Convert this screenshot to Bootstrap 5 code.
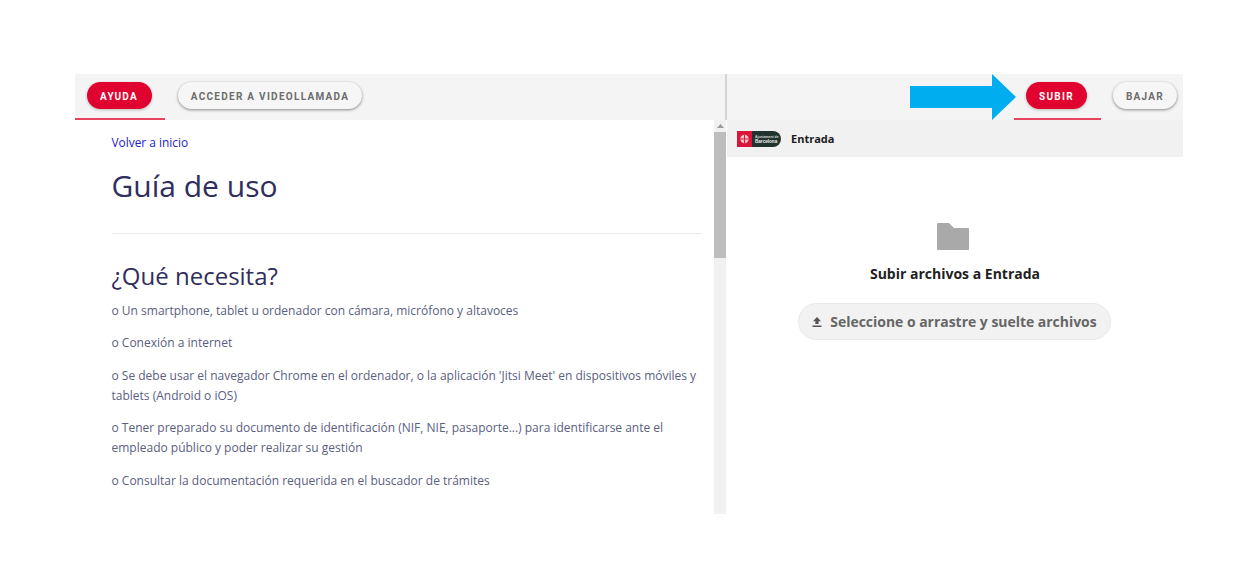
<!DOCTYPE html>
<html lang="es">
<head>
<meta charset="utf-8">
<title>Guía de uso</title>
<link href="https://cdn.jsdelivr.net/npm/bootstrap@5.3.0/dist/css/bootstrap.min.css" rel="stylesheet">
<style>
html,body{background:#fff;margin:0;height:575px;overflow:hidden}
.stage{padding:74px 73px 0 75px;box-sizing:content-box;height:440px}
.frame{height:440px;width:1108px}
.leftpane{width:651px;flex:none}
.midline{width:2px;background:#d4d4d4;height:46px;flex:none;margin-left:-1px;position:relative}
.rightpane{flex:1;min-width:0}
.bar{height:46px;background:#f4f4f4}
.tabcell{height:46px;border-bottom:2px solid #e8445f;display:flex;align-items:flex-start;padding:8px 2px 0 0;flex:none}
.tab-help{width:90px}
.tab-up{width:87px}
.pill{font:700 10px/27px Roboto,sans-serif;letter-spacing:1.28px;border-radius:14px;height:27px;padding:1px 0 0;border:0;white-space:nowrap;text-align:center}
.pill-red{background:#e0022f;color:#fff;box-shadow:0 1px 3px rgba(0,0,0,.25)}
.pill-light{background:#f6f6f6;color:#6c6c6c;box-shadow:0 1px 3px rgba(0,0,0,.45)}
.w-ayuda{width:65px}
.w-subir{width:61px}
.w-bajar{width:64px}
.w-video{width:184px}
.cell-video{margin-left:13px;padding-top:8px}
.cell-down{margin-left:12px;padding-top:8px}
.toolright{position:relative;padding-right:6px}
.scrollzone{height:394px;overflow:hidden}
.doc{flex:1;padding:14px 12px 0 36.5px;font-family:"Open Sans",sans-serif;min-width:0}
.back{font-size:11.9px;line-height:16px;color:#2222cc;text-decoration:none;display:block}
.doc h1{font-size:30px;line-height:40px;font-weight:400;color:#2f2e5e;margin:16px 0 27px}
.doc hr{margin:0 0 26px;border-top:1px solid #ebebeb;opacity:1}
.doc h2{font-size:24px;line-height:32px;font-weight:400;color:#2f2e5e;margin:0 0 9px}
.doc p{font-size:12px;line-height:20.3px;color:#5a6080;margin:0 0 12px}
.trackbar{width:12px;background:#f1f1f1;flex:none}
.trackarrow{height:12px;display:flex;align-items:center;justify-content:center}
.thumbbar{height:126px;background:#bdbdbd}
.folderhead{height:37px;background:#f1f1f1;padding-left:10px;gap:10px;font:700 11px "Open Sans",sans-serif;color:#1c1c1c}
.logotext{font:700 3.4px "Liberation Sans",sans-serif;fill:#d5dcd9}
.logotext-big{font:700 4.6px "Liberation Sans",sans-serif;fill:#eef2f0}
.dropzone{padding-top:65px;font-family:"Open Sans",sans-serif}
.foldericon{margin-right:5px;margin-top:1px}
.droptitle{font-size:14px;font-weight:700;color:#1f1f1f;line-height:20px;margin:14px 0 19px}
.dropbtn{width:313px;height:37px;border-radius:19px;background:#f2f2f2;border:1px solid #e8e8e8;color:#666;font:700 13.95px "Open Sans",sans-serif;gap:7px;padding:0;margin-right:2px}
.arrowmark{position:absolute;left:183px;top:0}
</style>
</head>
<body>
<div class="stage">
<div class="frame d-flex">
  <div class="leftpane d-flex flex-column">
    <div class="bar d-flex">
      <div class="tabcell tab-help justify-content-center"><button class="pill pill-red w-ayuda">AYUDA</button></div>
      <div class="cell-video d-flex"><button class="pill pill-light w-video">ACCEDER A VIDEOLLAMADA</button></div>
    </div>
    <div class="scrollzone d-flex">
      <div class="doc">
        <a class="back" href="#">Volver a inicio</a>
        <h1>Guía de uso</h1>
        <hr>
        <h2>¿Qué necesita?</h2>
        <p>o Un smartphone, tablet u ordenador con cámara, micrófono y altavoces</p>
        <p>o Conexión a internet</p>
        <p>o Se debe usar el navegador Chrome en el ordenador, o la aplicación 'Jitsi Meet' en dispositivos móviles y tablets (Android o iOS)</p>
        <p>o Tener preparado su documento de identificación (NIF, NIE, pasaporte...) para identificarse ante el empleado público y poder realizar su gestión</p>
        <p>o Consultar la documentación requerida en el buscador de trámites</p>
      </div>
      <div class="trackbar">
        <div class="trackarrow"><svg width="7" height="4" viewBox="0 0 7 4"><path d="M0 4 3.5 0 7 4z" fill="#9a9a9a"/></svg></div>
        <div class="thumbbar"></div>
      </div>
    </div>
  </div>
  <div class="midline"></div>
  <div class="rightpane d-flex flex-column">
    <div class="bar d-flex justify-content-end toolright">
      <div class="tabcell tab-up justify-content-center"><button class="pill pill-red w-subir">SUBIR</button></div>
      <div class="cell-down"><button class="pill pill-light w-bajar">BAJAR</button></div>
      <svg class="arrowmark" width="106" height="46" viewBox="0 0 106 46"><path d="M0 12H82V0L106 23 82 46V34H0z" fill="#00aeef"/></svg>
    </div>
    <div class="folderhead d-flex align-items-center">
      <svg width="44" height="16" viewBox="0 0 44 16" role="img" aria-label="Ajuntament de Barcelona">
        <rect x="8" width="36" height="16" rx="8" fill="#20332e"/>
        <rect width="15" height="16" fill="#dc1438"/>
        <circle cx="7.500" cy="8" r="4.200" fill="#f3c5cd"/>
        <path d="M7 3.500h1v9H7zM3.300 7.500h8.400v1H3.300z" fill="#dc1438"/>
        <text class="logotext" x="18" y="6.600">Ajuntament de</text>
        <text class="logotext-big" x="18" y="11.800">Barcelona</text>
      </svg>
      <span>Entrada</span>
    </div>
    <div class="dropzone d-flex flex-column align-items-center">
      <svg class="foldericon" width="32" height="27" viewBox="0 0 32 27"><path d="M1 0H12L17 5H31A1 1 0 0 1 32 6V26A1 1 0 0 1 31 27H1A1 1 0 0 1 0 26V1A1 1 0 0 1 1 0z" fill="#a9a9a9"/></svg>
      <div class="droptitle">Subir archivos a Entrada</div>
      <button class="dropbtn d-flex align-items-center justify-content-center">
        <svg width="12" height="12" viewBox="0 0 12 12"><path d="M6 1 10 5.200H7.600V8H4.400V5.200H2zM1.500 9.600H10.500V11H1.500z" fill="#555"/></svg>
        <span>Seleccione o arrastre y suelte archivos</span>
      </button>
    </div>
  </div>
</div>
</div>
<script src="https://cdn.jsdelivr.net/npm/bootstrap@5.3.0/dist/js/bootstrap.bundle.min.js"></script>
</body>
</html>
